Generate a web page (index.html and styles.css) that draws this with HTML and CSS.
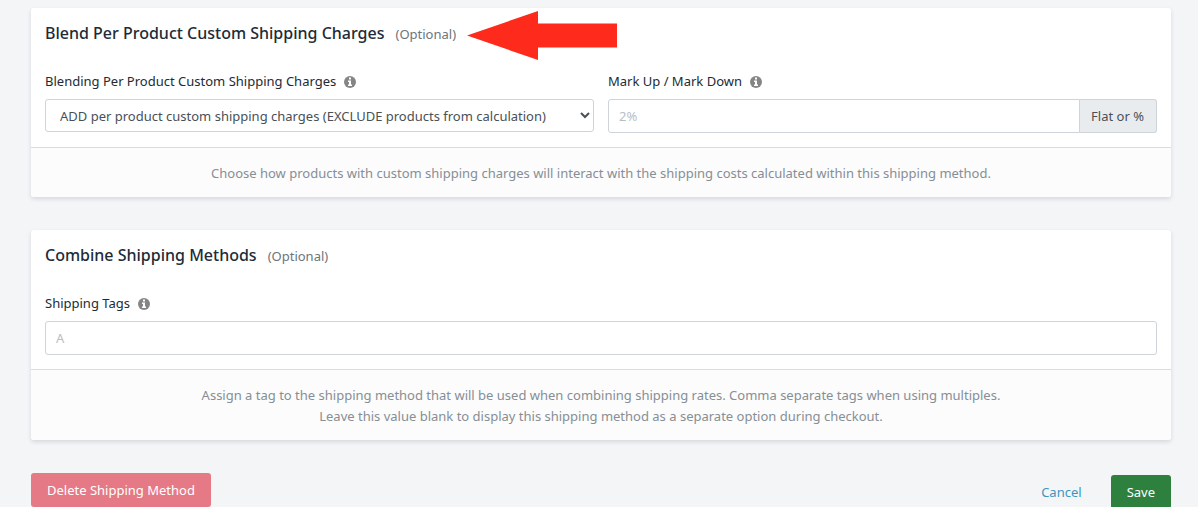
FILE: index.html
```html
<!DOCTYPE html>
<html lang="en">
<head>
<meta charset="utf-8">
<title>Shipping Method</title>
<link rel="stylesheet" href="styles.css">
</head>
<body>
<form class="page">
  <section class="card">
    <header class="card-header">
      <h2 class="card-title">Blend Per Product Custom Shipping Charges</h2>
      <span class="optional">(Optional)</span>
      <svg class="arrow" viewBox="0 0 151 50" aria-hidden="true"><path d="M0 25.500 71 1V13.500H150V37.500H71V50z"/></svg>
    </header>
    <div class="card-body">
      <div class="field">
        <div class="field-label">
          <label for="blend">Blending Per Product Custom Shipping Charges</label>
          <svg class="info" viewBox="0 0 12 12" aria-hidden="true"><circle cx="6" cy="6" r="6"/><path d="M5 1.500h2v2H5zM4 4.500h3v4h1V10H4V8.500h1V6H4z"/></svg>
        </div>
        <select class="control select" id="blend">
          <option>ADD per product custom shipping charges (EXCLUDE products from calculation)</option>
        </select>
      </div>
      <div class="field">
        <div class="field-label">
          <label for="markup">Mark Up / Mark Down</label>
          <svg class="info" viewBox="0 0 12 12" aria-hidden="true"><circle cx="6" cy="6" r="6"/><path d="M5 1.500h2v2H5zM4 4.500h3v4h1V10H4V8.500h1V6H4z"/></svg>
        </div>
        <div class="input-group">
          <input class="control" id="markup" type="text" placeholder="2%">
          <span class="addon">Flat or %</span>
        </div>
      </div>
    </div>
    <footer class="card-footer">
      <p class="help">Choose how products with custom shipping charges will interact with the shipping costs calculated within this shipping method.</p>
    </footer>
  </section>

  <section class="card">
    <header class="card-header">
      <h2 class="card-title">Combine Shipping Methods</h2>
      <span class="optional">(Optional)</span>
    </header>
    <div class="card-body">
      <div class="field">
        <div class="field-label">
          <label for="tags">Shipping Tags</label>
          <svg class="info" viewBox="0 0 12 12" aria-hidden="true"><circle cx="6" cy="6" r="6"/><path d="M5 1.500h2v2H5zM4 4.500h3v4h1V10H4V8.500h1V6H4z"/></svg>
        </div>
        <input class="control" id="tags" type="text" placeholder="A">
      </div>
    </div>
    <footer class="card-footer">
      <p class="help">Assign a tag to the shipping method that will be used when combining shipping rates. Comma separate tags when using multiples.<br>Leave this value blank to display this shipping method as a separate option during checkout.</p>
    </footer>
  </section>

  <div class="actions">
    <button class="button delete" type="button">Delete Shipping Method</button>
    <div class="actions-end">
      <a class="cancel" href="#">Cancel</a>
      <button class="button save" type="submit">Save</button>
    </div>
  </div>
</form>
</body>
</html>
```
FILE: styles.css
```css
* {
  box-sizing: border-box;
}

body {
  margin: 0;
  background: #f4f5f7;
  color: #212b36;
  font: 13px/21px "Noto Sans", sans-serif;
}

.page {
  padding: 8px 27px 0 31px;
}

.card {
  margin-bottom: 33px;
  border-radius: 3px;
  background: #fff;
  box-shadow: 0 2px 4px rgba(33, 43, 54, 0.14);
}

.card-header {
  display: flex;
  align-items: baseline;
  gap: 11px;
  height: 50px;
  padding: 13px 14px 0;
}

.card-title {
  margin: 0;
  font-size: 16px;
  font-weight: 500;
  line-height: 24px;
}

.optional {
  color: #6c757d;
}

.arrow {
  align-self: flex-end;
  width: 151px;
  height: 50px;
  margin-bottom: -2px;
  fill: #fe2b1d;
}

.card-body {
  display: flex;
  gap: 14px;
  padding: 13px 14px 14px;
}

.field {
  flex: 1;
  min-width: 0;
}

.field-label {
  display: flex;
  align-items: center;
  gap: 8px;
  margin-bottom: 7px;
}

.info {
  width: 12px;
  height: 12px;
}

.info circle {
  fill: #858585;
}

.info path {
  fill: #fff;
}

.control {
  display: block;
  width: 100%;
  height: 34px;
  padding: 0 10px;
  border: 1px solid #ced4da;
  border-radius: 3px;
  background: #fff;
  color: #495057;
  font: inherit;
}

.select {
  height: 33px;
}

.control::placeholder {
  color: #b9bec3;
}

.input-group {
  display: flex;
}

.input-group .control {
  flex: 1;
  min-width: 0;
  border-radius: 3px 0 0 3px;
}

.addon {
  padding: 6px 12px 5px 11px;
  border: 1px solid #ced4da;
  border-left: 0;
  border-radius: 0 3px 3px 0;
  background: #e9ecef;
  color: #495057;
}

.card-footer {
  padding: 15px 14px 13px;
  border-top: 1px solid #dadcde;
  border-radius: 0 0 3px 3px;
  background: #fcfcfc;
}

.help {
  margin: 0;
  color: #868e96;
  text-align: center;
}

.actions {
  display: flex;
  align-items: flex-start;
  justify-content: space-between;
}

.actions-end {
  display: flex;
  align-items: center;
  gap: 29px;
  padding-top: 2px;
}

.button {
  height: 34px;
  padding: 1px 16px 0;
  border: 0;
  border-radius: 3px;
  color: #fff;
  font: inherit;
}

.delete {
  background: #e57985;
}

.cancel {
  color: #3b97be;
  text-decoration: none;
}

.save {
  background: #2e803f;
}
```
